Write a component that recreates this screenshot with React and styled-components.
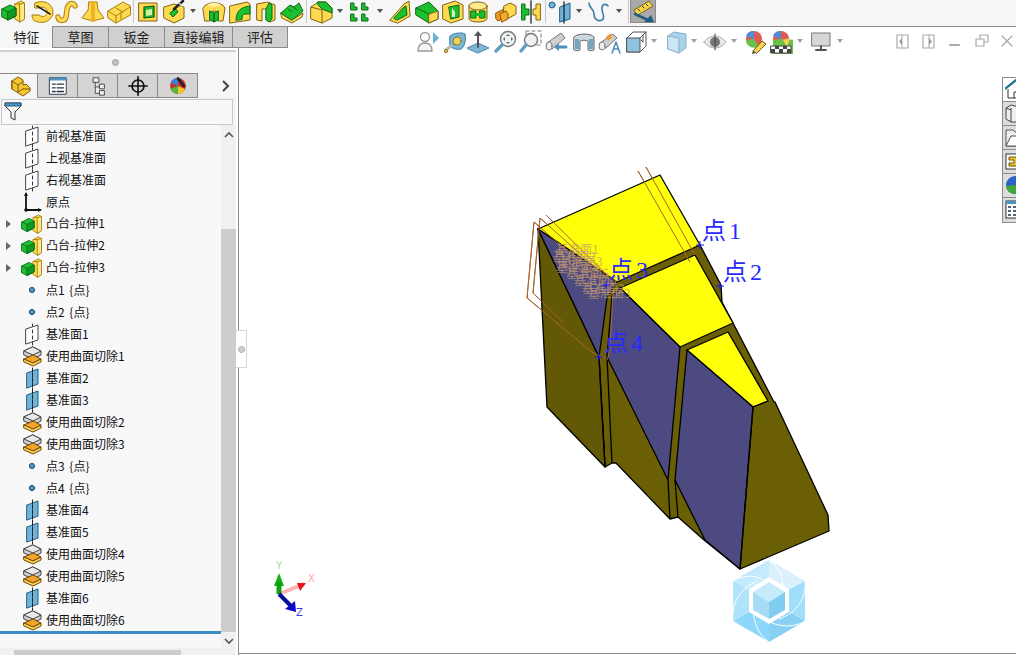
import React from "react";
import styled, { createGlobalStyle } from "styled-components";

const Global = createGlobalStyle`
  html, body { margin: 0; padding: 0; background: #fff; }
  body { font-family: "Noto Sans CJK SC", "Liberation Sans", sans-serif; }
`;

const Y = "#ffd94f";
const YD = "#a8800f";
const G = "#1cc02f";
const GD = "#0b6b18";
const B = "#6fb3d6";
const BD = "#1f5f85";

const Glyph = ({ size = 24, children }) => (
  <svg width={size} height={size} viewBox="0 0 24 24" strokeLinejoin="round" strokeLinecap="round" style={{ display: "block" }}>
    {children}
  </svg>
);

// feature toolbar
const Extrude = ({ size }) => (
  <Glyph size={size}>
    <polygon points="14,4 20,1 23.500,3 23.500,19 19,22 14,19" fill={Y} stroke={YD} />
    <polygon points="19,4 23.500,3 23.500,19 19,22" fill="#ffe98a" stroke={YD} />
    <path d="M14 4l5 0" stroke={YD} />
    <polygon points="1,9 9,5 15,8 15,16 7,20 1,17" fill={G} stroke={GD} />
    <polygon points="7,12 15,8 15,16 7,20" fill="#0e9a22" stroke={GD} />
    <path d="M1 9l6 3" stroke={GD} />
  </Glyph>
);
const Revolve = () => (
  <Glyph>
    <path d="M5 3c9-4 18 1 18 9s-9 13-18 9c-2-1-3-3-3-6h7c4 3 8 1 8-3s-4-6-8-4H5z" fill={Y} stroke={YD} />
    <path d="M7 6l13 8" stroke="#222" strokeWidth="1.500" />
  </Glyph>
);
const Sweep = () => (
  <Glyph>
    <path d="M3 17c1 5 7 4 8 0 1-4 0-9 3-12 2-2 5-2 6 1" fill="none" stroke={YD} strokeWidth="5.500" />
    <path d="M3 17c1 5 7 4 8 0 1-4 0-9 3-12 2-2 5-2 6 1" fill="none" stroke={Y} strokeWidth="3.500" />
  </Glyph>
);
const Loft = () => (
  <Glyph>
    <path d="M8 2h8l1 8 6 8-11 3-11-3 6-8z" fill={Y} stroke={YD} />
    <path d="M12 3v17" stroke="#f0b422" strokeWidth="4" />
  </Glyph>
);
const Block = () => (
  <Glyph>
    <polygon points="1,11 16,2 23.500,6 23.500,15 9,23 1,18" fill={Y} stroke={YD} />
    <path d="M1 11l8 5 14-9M9 16v7M9 8l7 4M14 19v-6" stroke={YD} fill="none" />
  </Glyph>
);
const Frame = () => (
  <Glyph>
    <polygon points="3,3 21,3 21,21 3,21" fill={Y} stroke="#7d6410" />
    <polygon points="8,7 18,6 18,17 8,18" fill={G} stroke="#12500f" strokeWidth="1.200" />
    <polygon points="10,10 16,9 16,15 10,16" fill="#d6f0a8" />
  </Glyph>
);
const Wizard = () => (
  <Glyph>
    <path d="M2 7l10-3 10 3v11l-10 5-10-5z" fill={Y} stroke="#7d6410" />
    <path d="M8 14l3 3 5-5-2-3-5 3z" fill={G} stroke={GD} />
    <path d="M12 9l9-8" stroke="#222" strokeWidth="2.600" />
    <path d="M17 3l3 3" stroke="#ddd" strokeWidth="1.400" />
  </Glyph>
);
const Dome = () => (
  <Glyph>
    <path d="M1 8c3-7 19-7 22 0l-2 13h-5V12l-4-1-4 1v9H3z" fill={Y} stroke="#7d6410" />
    <path d="M8 11l4 2v9l-4-2zM16 11l-4 2v9l4-2z" fill={G} stroke={GD} />
    <path d="M5 5c4-3 10-3 14 0l-7 2z" fill="#fff2a8" />
  </Glyph>
);
const Corner = () => (
  <Glyph>
    <polygon points="2,6 19,2 22,4 22,20 2,23" fill={Y} stroke="#7d6410" />
    <path d="M8 20c0-8 4-13 14-14v8h-5c-2 0-3 2-3 5z" fill={G} stroke={GD} />
  </Glyph>
);
const Slot = () => (
  <Glyph>
    <path d="M3 4l11-2 7 3v15l-5 2-3-2V9H8v12l-5-1z" fill={Y} stroke="#7d6410" />
    <path d="M12 9l3-6 3 2v14l-3 3-3-2z" fill={G} stroke={GD} />
  </Glyph>
);
const Wave = () => (
  <Glyph>
    <polygon points="1,13 12,20 23,13 22,17 12,23 2,18" fill={Y} stroke="#7d6410" />
    <path d="M1 13l9-8 4 2 5-4 4 8-11 9z" fill={G} stroke={GD} />
    <path d="M8 9l4 3M13 7l4 3" stroke={GD} fill="none" />
  </Glyph>
);
const Chamfer = () => (
  <Glyph>
    <path d="M2 7l7-5h8l6 6v10l-10 5-11-4z" fill={Y} stroke="#7d6410" />
    <path d="M9 2h8l6 6v5l-10-4-4-4z" fill={G} stroke={GD} />
    <path d="M2 7l11 3v13" fill="none" stroke="#7d6410" />
  </Glyph>
);
const Pattern = () => (
  <Glyph>
    <g fill={G} stroke={GD}>
      <path d="M3 3h3v4h3v3H3zM14 3h3v4h3v3h-6zM3 14h3v4h3v3H3zM14 14h3v4h3v3h-6z" />
    </g>
  </Glyph>
);
const Rib = () => (
  <Glyph>
    <path d="M2 20L16 4l5-3 1 15-12 7z" fill={Y} stroke="#7d6410" />
    <path d="M6 18l10-11 2-1 1 9-10 5z" fill={G} stroke={GD} />
  </Glyph>
);
const Wedge = () => (
  <Glyph>
    <polygon points="1,8 14,2 23,11 23,19 14,23 1,15" fill={G} stroke={GD} />
    <polygon points="14,14 23,11 23,19 14,23" fill={Y} stroke="#7d6410" />
    <path d="M14 14L1 8" stroke={GD} />
  </Glyph>
);
const Shell = () => (
  <Glyph>
    <polygon points="2,5 14,1 22,5 22,19 10,23 2,19" fill={Y} stroke="#7d6410" />
    <polygon points="8,7 18,5 18,17 10,19" fill={G} stroke={GD} />
    <path d="M11 8l3 4v5h-3z" fill="#ddeec0" />
  </Glyph>
);
const Wrap = () => (
  <Glyph>
    <path d="M3 6v13c2 4 16 4 18 0V6z" fill={Y} stroke="#7d6410" />
    <ellipse cx="12" cy="6" rx="9" ry="4" fill="#ffe98a" stroke="#7d6410" />
    <path d="M5 11h5v7H5zM14 11h5v7h-5z" fill={G} stroke={GD} />
    <path d="M10 13h4v3h-4z" fill={G} />
  </Glyph>
);
const Combine = () => (
  <Glyph>
    <polygon points="2,13 10,9 10,18 4,21 2,19" fill="#f39a1f" stroke="#8a5308" />
    <polygon points="10,6 16,3 22,6 22,14 15,18 10,15" fill={Y} stroke="#7d6410" />
    <polygon points="6,14 12,11 14,14 14,19 8,22" fill="#f6a92f" stroke="#8a5308" />
  </Glyph>
);
const Mirror = () => (
  <Glyph>
    <path d="M3 4h3v5h4v6H6v5H3z" fill={G} stroke={GD} />
    <path d="M21 4h-4v5h-3v6h3v5h4z" fill={Y} stroke="#7d6410" />
    <path d="M12 1v22" stroke="#222" strokeWidth="1.300" />
  </Glyph>
);
const RefPlane = () => (
  <Glyph>
    <circle cx="4" cy="5" r="3" fill={B} stroke={BD} />
    <polygon points="12,7 22,3 22,19 12,22" fill={B} stroke={BD} />
    <path d="M16 2v21" stroke="#222" strokeWidth="1.300" />
  </Glyph>
);
const Curve = () => (
  <Glyph>
    <path d="M2 3c0 5 5 6 5 11 0 5 4 8 8 6 5-3-3-10 1-15 1-1 4-1 5 1" fill="none" stroke="#3a7ea5" strokeWidth="1.600" />
  </Glyph>
);
const Instant = () => (
  <Glyph>
    <polygon points="3,10 18,1 22,6 7,15" fill="#f4d447" stroke="#7d6410" />
    <path d="M7 9l2 2M11 6l2 2M15 4l2 2" stroke="#333" />
    <path d="M4 14l15 7" stroke={BD} strokeWidth="2.600" />
    <polygon points="23,22 13,22 20,15" fill={BD} />
  </Glyph>
);

// view toolbar
const Prev = () => (
  <Glyph>
    <circle cx="9" cy="7" r="4.500" fill="#fff" stroke="#999" strokeWidth="1.400" />
    <path d="M2 21c0-6 3-8 7-8s7 2 7 8z" fill="#f4f4f4" stroke="#999" strokeWidth="1.400" />
    <polygon points="17,2 23,8 17,14" fill="#6fb0d8" />
  </Glyph>
);
const Tape = () => (
  <Glyph>
    <path d="M7 6c3-3 12-4 15-2 1 5 0 13-4 15-3 1-9 0-11-3z" fill="#7cb4d4" stroke="#3d7da3" />
    <circle cx="14" cy="11" r="4" fill="#f0d55a" stroke="#8a7518" />
    <path d="M8 16l-5 4" stroke="#bbb" strokeWidth="3" />
    <circle cx="3" cy="21" r="1.600" fill="#f2c75c" stroke="#8a7518" />
  </Glyph>
);
const Normal = () => (
  <Glyph>
    <polygon points="0,18 11,13 22,18 11,23" fill="#7fb4d6" stroke="#4d87ac" />
    <path d="M11 17V4" stroke="#555" strokeWidth="2" />
    <polygon points="11,1 15,6 7,6" fill="#555" />
  </Glyph>
);
const ZoomFit = () => (
  <Glyph>
    <circle cx="14" cy="9" r="7.500" fill="#eef3f6" stroke="#777" strokeWidth="1.400" />
    <path d="M8 15L2 21" stroke="#5f9dc3" strokeWidth="3.400" />
    <path d="M14 4l2 2h-4zM14 14l2-2h-4zM9 9l2-2v4zM19 9l-2-2v4z" fill="#666" />
  </Glyph>
);
const ZoomBox = () => (
  <Glyph>
    <rect x="7" y="1" width="15" height="14" fill="none" stroke="#777" strokeDasharray="3 3" />
    <circle cx="12" cy="10" r="6.500" fill="#eef3f6" stroke="#777" strokeWidth="1.400" />
    <path d="M7 15L2 21" stroke="#5f9dc3" strokeWidth="3.400" />
  </Glyph>
);
const Scope = () => (
  <Glyph>
    <path d="M3 13L17 3l4 5-13 11z" fill="#cfcfcf" stroke="#777" />
    <ellipse cx="5" cy="16" rx="3" ry="4" fill="#eee" stroke="#777" />
    <path d="M13 17h9" stroke="#4f90b8" strokeWidth="3" />
    <polygon points="10,17 15,13 15,21" fill="#4f90b8" />
  </Glyph>
);
const Section = () => (
  <Glyph>
    <path d="M2 7c3-4 17-4 20 0v13c-2 1-4 1-6 0V11c-2-1-6-1-8 0v9c-2 1-4 1-6 0z" fill="#cfd8dd" stroke="#666" />
    <path d="M3 9h4v10H3zM17 9h4v10h-4z" fill="#6fa6c6" />
  </Glyph>
);
const Dynamic = () => (
  <Glyph>
    <path d="M2 13L15 4l4 4-11 10z" fill="#cfcfcf" stroke="#777" />
    <ellipse cx="4" cy="16" rx="3" ry="4" fill="#eee" stroke="#777" />
    <path d="M8 7l5-4-1 4 3-1-5 5z" fill="#f29a1f" />
    <path d="M14 23l4-11 4 11M15.500 19h5" fill="none" stroke="#4f90b8" strokeWidth="1.600" />
  </Glyph>
);
const Orient = () => (
  <Glyph>
    <polygon points="3,8 9,2 22,2 22,16 16,22 3,22" fill="#fff" stroke="#555" />
    <polygon points="3,8 16,8 16,22 3,22" fill="#8fc3e0" stroke="#555" />
    <path d="M16 8l6-6M19 5v7M19 12l-2-2" stroke="#555" fill="none" />
  </Glyph>
);
const Cube = () => (
  <Glyph>
    <polygon points="4,6 10,2 22,4 22,18 15,23 4,19" fill="#a7d2ea" stroke="#8ab0c4" />
    <polygon points="4,6 15,8 15,23 4,19" fill="#cbe6f5" stroke="#8ab0c4" />
  </Glyph>
);
const Eye = () => (
  <Glyph>
    <path d="M1 12c6-8 16-8 22 0-6 8-16 8-22 0z" fill="#e8e8e8" stroke="#aaa" />
    <circle cx="12" cy="12" r="5" fill="#777" />
    <path d="M12 4v16" stroke="#444" />
  </Glyph>
);
const Ball = ({ cx = 11, cy = 9, r = 8 }) => (
  <g>
    <circle cx={cx} cy={cy} r={r} fill="#e05a55" />
    <path d={`M${cx} ${cy}L${cx - r} ${cy - 3}A${r} ${r} 0 0 1 ${cx} ${cy - r}z`} fill="#4f8fd6" />
    <path d={`M${cx} ${cy}L${cx - r} ${cy + 1}A${r} ${r} 0 0 0 ${cx + 5} ${cy + r - 1}z`} fill="#6cc04a" />
  </g>
);
const Appear = () => (
  <Glyph>
    <Ball />
    <path d="M10 21l9-10 4 3-9 9z" fill="#f6d253" stroke="#6b5a14" />
    <path d="M10 21l-1 3 4-1z" fill="#444" />
  </Glyph>
);
const Scene = () => (
  <Glyph>
    <Ball cx="12" />
    <path d="M14 10l7-2-3 9z" fill="#f6d253" />
    <path d="M2 16h20v7H2z" fill="#fff" stroke="#444" />
    <path d="M2 19h4v-3h4v3h4v-3h4v3h4v4h-4v-4h-4v4h-4v-4H6v4H2z" fill="#444" />
  </Glyph>
);
const Screen = () => (
  <Glyph>
    <rect x="3" y="3" width="18" height="13" fill="#d7d7d7" stroke="#777" />
    <path d="M12 16v3M7 20h10" stroke="#555" strokeWidth="2" />
  </Glyph>
);
const Caret = styled.i`
  display: block;
  width: 0;
  height: 0;
  border: 3.5px solid transparent;
  border-top: 4px solid ${(p) => p.$c || "#555"};
  border-bottom: 0;
  margin-top: 9px;
`;
const WinPrev = ({ flip }) => (
  <Glyph>
    <rect x="6" y="5" width="11" height="13" fill="none" stroke="#aaa" strokeWidth="1.200" />
    <path d={flip ? "M12 5v13" : "M11 5v13"} stroke="#aaa" />
    <polygon points={flip ? "12,8 15,11.500 12,15" : "11,8 8,11.500 11,15"} fill="#999" />
  </Glyph>
);
const WinNext = () => <WinPrev flip />;
const WinMin = () => (
  <Glyph><path d="M7 15h9" stroke="#aaa" strokeWidth="2" /></Glyph>
);
const WinMax = () => (
  <Glyph>
    <path d="M10 9V5h8v7h-4" fill="none" stroke="#aaa" strokeWidth="1.200" />
    <rect x="6" y="9" width="8" height="7" fill="none" stroke="#aaa" strokeWidth="1.200" />
  </Glyph>
);
const WinClose = () => (
  <Glyph><path d="M7 6l10 10M17 6L7 16" stroke="#aaa" strokeWidth="1.300" /></Glyph>
);

// feature tree
const PlaneLine = () => (
  <Glyph>
    <polygon points="5,6 17,2 17,17 5,21" fill="#fff" stroke="#444" />
    <path d="M11.500 1v2M11.500 7v3M11.500 13v3M11.500 19v3" stroke="#333" />
  </Glyph>
);
const PlaneBlue = () => (
  <Glyph>
    <polygon points="6,6 17,2 17,17 6,21" fill={B} stroke={BD} />
    <path d="M11.500 1v22" stroke="#222" strokeDasharray="4 1" />
  </Glyph>
);
const Origin = () => (
  <Glyph>
    <path d="M5 3v16h14" fill="none" stroke="#111" strokeWidth="1.800" />
    <path d="M5 1l2 4H3zM21 19l-4 2v-4z" fill="#111" />
    <circle cx="5" cy="19" r="1.800" fill="#111" />
  </Glyph>
);
const TreeExtrude = () => <Extrude size={21} />;
const Dot = () => (
  <Glyph>
    <circle cx="11" cy="11" r="2.600" fill="#4f93c0" stroke="#1f4f70" />
  </Glyph>
);
const Cut = () => (
  <Glyph>
    <polygon points="3,6 12,2 20,6 20,10 12,14 3,10" fill="#cfcfcf" stroke="#444" />
    <polygon points="3,6 12,10 20,6 12,2" fill="#e8e8e8" stroke="#444" />
    <polygon points="3,14 12,10 20,14 12,18" fill="#f3a52a" stroke="#6b4608" />
    <polygon points="3,14 12,18 20,14 20,17 12,21 3,17" fill="#ffd24f" stroke="#6b4608" />
  </Glyph>
);

const topItems = [
  [Extrude, 13], [Revolve, 42], [Sweep, 67], [Loft, 93], [Block, 119], ["sep", 133],
  [Frame, 148], [Wizard, 174], ["dd", 193], [Dome, 214], [Corner, 240], [Slot, 266], [Wave, 292], ["sep", 306],
  [Chamfer, 321], ["dd", 340], [Pattern, 360], ["dd", 380], [Rib, 400], [Wedge, 427], [Shell, 453], [Wrap, 478],
  [Combine, 506], [Mirror, 531], ["sep", 545], [RefPlane, 560], ["dd", 579], [Curve, 599], ["dd", 619], ["sep", 628],
];

const viewItems = [
  [Prev, 428], [Tape, 455], [Normal, 479], [ZoomFit, 506], [ZoomBox, 531], [Scope, 556], [Section, 584], [Dynamic, 610],
  [Orient, 636], ["dd", 654], [Cube, 676], ["dd", 694], [Eye, 715], ["dd", 734], [Appear, 755], [Scene, 781], ["dd", 800],
  [Screen, 821], ["dd", 840],
  [WinPrev, 903], [WinNext, 929], [WinMin, 955], [WinMax, 982], [WinClose, 1007],
];

const treeRows = [
  [PlaneLine, "前视基准面"],
  [PlaneLine, "上视基准面"],
  [PlaneLine, "右视基准面"],
  [Origin, "原点"],
  [TreeExtrude, "凸台-拉伸1", true],
  [TreeExtrude, "凸台-拉伸2", true],
  [TreeExtrude, "凸台-拉伸3", true],
  [Dot, "点1 {点}"],
  [Dot, "点2 {点}"],
  [PlaneLine, "基准面1"],
  [Cut, "使用曲面切除1"],
  [PlaneBlue, "基准面2"],
  [PlaneBlue, "基准面3"],
  [Cut, "使用曲面切除2"],
  [Cut, "使用曲面切除3"],
  [Dot, "点3 {点}"],
  [Dot, "点4 {点}"],
  [PlaneBlue, "基准面4"],
  [PlaneBlue, "基准面5"],
  [Cut, "使用曲面切除4"],
  [Cut, "使用曲面切除5"],
  [PlaneBlue, "基准面6"],
  [Cut, "使用曲面切除6"],
];

const Page = styled.div`
  width: 1016px;
  height: 655px;
  overflow: hidden;
  display: flex;
  flex-direction: column;
  background: #fff;
`;
const TopBar = styled.div`
  flex: 0 0 26px;
  display: flex;
  align-items: flex-start;
  background: #f6f6f6;
`;
const Cell = styled.div`
  flex: 0 0 ${(p) => p.$w}px;
  margin-left: ${(p) => p.$ml}px;
  height: 24px;
  display: flex;
  justify-content: center;
`;
const Sep = styled.div`
  flex: 0 0 1px;
  margin-left: ${(p) => p.$ml}px;
  height: 23px;
  background: #c9c9c9;
`;
const ActiveTool = styled.div`
  flex: 0 0 26px;
  margin-left: ${(p) => p.$ml}px;
  height: 23px;
  background: #a9a9a9;
  border: 1px solid #8a8a8a;
  border-top: 0;
  box-sizing: border-box;
  display: flex;
  justify-content: center;
`;
const TabRow = styled.div`
  flex: 0 0 22px;
  height: 22px;
  min-height: 0;
  display: flex;
  align-items: flex-start;
  position: relative;
  z-index: 1;
`;
const TabStrip = styled.div`
  display: flex;
  flex: 0 0 288px;
  height: 22px;
  background: #f6f6f6;
`;
const Tab = styled.div`
  flex: 0 0 ${(p) => p.$w}px;
  box-sizing: border-box;
  height: 22px;
  border-top: 1px solid ${(p) => (p.$on ? "#f6f6f6" : "#8a8a8a")};
  border-bottom: 1px solid ${(p) => (p.$on ? "#f6f6f6" : "#8a8a8a")};
  border-left: 1px solid ${(p) => (p.$on ? "transparent" : "#8a8a8a")};
  background: ${(p) => (p.$on ? "#f6f6f6" : "#d0d0d0")};
  font-size: 13px;
  line-height: 20px;
  color: #222;
  text-align: center;
  &:last-child { border-right: 1px solid #8a8a8a; }
`;
const ViewBar = styled.div`
  flex: 1;
  height: 28px;
  border-top: 1px solid #8a8a8a;
  box-sizing: border-box;
  padding-top: 3px;
  display: flex;
  align-items: flex-start;
`;
const Body = styled.div`
  flex: 1;
  display: flex;
  min-height: 0;
`;
const Sidebar = styled.aside`
  flex: 0 0 239px;
  box-sizing: border-box;
  border-right: 1px solid #8a8a8a;
  padding-right: 2px;
  background: #fff;
  position: relative;
  display: flex;
  flex-direction: column;
`;
const PanelHead = styled.div`
  flex: 0 0 23px;
  background: #f6f6f6;
  box-sizing: border-box;
  margin-top: 2px;
  border-top: 2px solid #d2d2d2;
  display: flex;
  align-items: center;
  justify-content: center;
  padding-right: 6px;
  &::before {
    content: "";
    width: 5px;
    height: 5px;
    border-radius: 50%;
    background: #c4c4c4;
    border: 1px solid #9a9a9a;
  }
`;
const PanelTabs = styled.div`
  flex: 0 0 25px;
  display: flex;
  align-items: stretch;
  background: #f6f6f6;
`;
const PanelTab = styled.div`
  flex: 0 0 ${(p) => p.$w}px;
  box-sizing: border-box;
  background: ${(p) => (p.$on ? "#f6f6f6" : "#d4d4d4")};
  border-top: 1px solid #8a8a8a;
  border-bottom: ${(p) => (p.$on ? "0" : "1px solid #8a8a8a")};
  border-right: 1px solid #8a8a8a;
  display: flex;
  align-items: center;
  justify-content: center;
`;
const More = styled.div`
  margin-left: auto;
  width: 24px;
  padding-left: 4px;
  box-sizing: border-box;
  display: flex;
  align-items: center;
  justify-content: center;
`;
const FilterRow = styled.div`
  flex: 0 0 27px;
  background: #f6f6f6;
  padding: 1px 3px 0 1px;
  box-sizing: border-box;
`;
const FilterBox = styled.div`
  height: 26px;
  box-sizing: border-box;
  border: 1px solid #c8c8c8;
  background: #f8f8f8;
  padding: 1px 0 0 2px;
`;
const TreeArea = styled.div`
  flex: 1;
  display: flex;
  min-height: 0;
  background: #f0f0f0;
`;
const TreeList = styled.div`
  flex: 0 0 221px;
  background: #f8f8f8;
  height: 523px;
  border-bottom-right-radius: 4px;
`;
const Row = styled.div`
  height: 22px;
  display: grid;
  grid-template-columns: 21px 25px 1fr;
  align-items: center;
  font-size: 12px;
  line-height: 20px;
  color: #111;
  white-space: nowrap;
  word-spacing: 2px;
`;
const RowText = styled.span`
  display: block;
  height: 22px;
`;
const Expand = styled.i`
  display: block;
  width: 0;
  height: 0;
  margin-left: 6px;
  border: 4px solid transparent;
  border-left: 5px solid #666;
  border-right: 0;
`;
const RowIcon = styled.div`
  display: flex;
  justify-content: flex-start;
`;
const ActiveLine = styled.div`
  height: 3px;
  background: #3b8ec4;
`;
const VScroll = styled.div`
  flex: 0 0 15px;
  height: 525px;
  display: flex;
  flex-direction: column;
  background: #f0f0f0;
`;
const Thumb = styled.div`
  flex: 0 0 403px;
  background: #cdcdcd;
`;
const ScrollEnd = styled.div`
  flex: ${(p) => (p.$top ? "0 0 104px" : "1")};
  padding-top: ${(p) => (p.$top ? "6px" : "0")};
  box-sizing: border-box;
  display: flex;
  align-items: ${(p) => (p.$top ? "flex-start" : "center")};
  justify-content: center;
`;
const HScroll = styled.div`
  flex: 0 0 5px;
  background: #f0f0f0;
  display: flex;
  padding-left: 14px;
`;
const HThumb = styled.div`
  width: 167px;
  background: #cdcdcd;
`;
const Gripper = styled.div`
  position: absolute;
  left: 236px;
  top: 282px;
  width: 11px;
  height: 38px;
  box-sizing: border-box;
  background: #fff;
  border: 1px solid #d8d8d8;
  border-left: 0;
  display: flex;
  align-items: center;
  justify-content: center;
  &::before {
    content: "";
    width: 5px;
    height: 5px;
    border-radius: 50%;
    background: #d0d0d0;
    border: 1px solid #aaa;
  }
`;
const Viewport = styled.main`
  flex: 1;
  position: relative;
  margin-bottom: 1px;
  border-bottom: 1px solid #8a8a8a;
  overflow: hidden;
`;
const Scene3D = styled.svg`
  position: absolute;
  left: 0;
  top: 0;
  width: 777px;
  height: 605px;
`;
const PointLabel = styled.text`
  font-family: "Liberation Serif", "Noto Sans CJK SC", serif;
  font-size: 24px;
  letter-spacing: -1.5px;
  fill: #2a2aff;
`;
const PlaneLabel = styled.text`
  font-family: "Noto Sans CJK SC", sans-serif;
  font-size: 12px;
  fill: #c49a70;
  opacity: 0.75;
`;
const AxisLabel = styled.text`
  font-family: "DejaVu Sans", sans-serif;
  font-size: 10px;
  fill: ${(p) => p.$c};
`;
const TaskPane = styled.div`
  position: absolute;
  right: 0;
  top: 29px;
  width: 14px;
  overflow: hidden;
  border: 1px solid #8a8a8a;
  border-right: 0;
  box-sizing: border-box;
`;
const TaskBtn = styled.div`
  height: 24px;
  box-sizing: border-box;
  background: ${(p) => (p.$on ? "#fff" : "#dcdcdc")};
  border-bottom: 1px solid #8a8a8a;
  overflow: hidden;
  padding: 1px 0 0 2px;
  &:last-child { border-bottom: 0; }
`;

// turns the icon centres into flow margins
const BarItems = ({ items, start = 0 }) => {
  let edge = start;
  return items.map(([Icon, c], i) => {
    const w = Icon === "sep" ? 1 : Icon === "dd" ? 8 : 24;
    const left = c - w / 2;
    const ml = left - edge;
    edge = left + w;
    if (Icon === "sep") return <Sep key={i} $ml={ml} />;
    if (Icon === "dd") return <Cell key={i} $w={8} $ml={ml}><Caret $c={start ? "#a0a0a0" : "#555"} /></Cell>;
    return <Cell key={i} $w={24} $ml={ml}><Icon /></Cell>;
  });
};

const Logo = () => (
  <g>
    <polygon points="769,600 769,560 805,581" fill="#daf1fd" />
    <polygon points="769,600 805,581 805,621" fill="#a0dffb" />
    <polygon points="769,600 805,621 769,642" fill="#88d0f4" />
    <polygon points="769,600 769,642 733,621" fill="#8cd8fb" />
    <polygon points="769,600 733,621 733,581" fill="#b0e3fa" />
    <polygon points="769,600 733,581 769,560" fill="#c4ebfd" />
    <path d="M733 581c14-8 30-6 40 8M769 560c12 8 18 24 10 40M805 581c2 16-8 32-26 38M805 621c-12 8-32 6-42-4M769 642c-12-8-18-24-14-40M733 621c-2-16 6-32 24-40" fill="none" stroke="#fff" strokeWidth="1" />
    <polygon points="769,577 789,589 789,612 769,624 749,612 749,589" fill="#fff" />
    <polygon points="769,582 785,592 769,602 753,592" fill="#c6ebfb" />
    <polygon points="753,592 769,602 769,619 753,610" fill="#a8dcf6" />
    <polygon points="785,592 769,602 769,619 785,610" fill="#80ccf0" />
  </g>
);

const Model = () => (
  <g stroke="#000" strokeWidth="1.300" strokeLinejoin="round">
    {/* olive sides */}
    <polygon points="538,229 599,357 605,467 612,463 616,463 670,519 678,517 704,540 740,569 829,531 828,515 775,402 774,402 733,323 722,302 721,285 700,245" fill="#6b5f05" />
    <polygon points="538,229 599,357 605,467 547,407" fill="#625805" />
    {/* yellow top faces */}
    <polygon points="538,229 660,175 700,245 617,282" fill="#ffff0a" />
    <polygon points="620,288 695,255 733,323 680,347" fill="#ffff0a" />
    <polygon points="687,350 728,332 768,401 753,407" fill="#ffff0a" />
    {/* blue faces */}
    <polygon points="538,229 617,282 607,298 599,357" fill="#4c4a80" />
    <polygon points="620,288 680,347 668,480 607,357 612,296" fill="#4c4a80" />
    <polygon points="687,350 753,407 740,569 705,540 675,480" fill="#4c4a80" />
    {/* seams */}
    <path d="M607 357L612 463M599 357L605 467M668 480L670 519M675 480L678 517M753 407L740 569M753 407L768 401" fill="none" />
  </g>
);

const Planes = () => (
  <g fill="none" stroke="#a9652e" strokeWidth="1">
    <path d="M638 171L690 262M646 167L695 255" />
    <path d="M534 222L527 298L593 353L606 358" />
    <path d="M540 218L533 293L563 322" />
    <path d="M546 215L612 280M534 222L610 288M540 218L614 284" />
    <path d="M613 290L610 350L607 360" />
  </g>
);

const stacked = [
  [556, 254, "基准面1"], [553, 261, "基准面2"], [560, 266, "基准面3"], [556, 272, "基准面4"],
  [566, 278, "基准面5"], [574, 285, "基准面6"], [582, 293, "基准面2"], [588, 298, "基准面3"],
];

const Cross = ({ x, y }) => <path d={`M${x - 4} ${y}h8M${x} ${y - 4}v8`} stroke="#1414ff" strokeWidth="1" />;

const Triad = () => (
  <g>
    <path d="M279 594L304 584" stroke="#ffb3b3" strokeWidth="3.600" />
    <polygon points="306,583 297,583 300,591" fill="#e8141c" />
    <polygon points="279,573 274,586 284,586" fill="#12b012" />
    <path d="M279 594V582" stroke="#12a012" strokeWidth="5" />
    <path d="M279 594L293 608" stroke="#0a0a9a" strokeWidth="4" />
    <polygon points="296,612 295,601 285,609" fill="#0a0ac8" />
    <AxisLabel x="276" y="569" $c="#9be89b">Y</AxisLabel>
    <AxisLabel x="308" y="582" $c="#ffa8a8">X</AxisLabel>
    <AxisLabel x="296" y="616" $c="#3a3ae0">Z</AxisLabel>
  </g>
);

const TabBall = () => (
  <Glyph size={20}>
    <circle cx="12" cy="12" r="9.500" fill="#c9302a" />
    <path d="M12 12L3 8a9.500 9.500 0 0 1 9-5.500z" fill="#3f7ed0" />
    <path d="M12 12L3 15a9.500 9.500 0 0 0 9 6.500z" fill="#55b53a" />
    <path d="M12 12v9.500a9.500 9.500 0 0 0 8.500-6z" fill="#f1c62f" />
    <path d="M12 3l7 9" stroke="#222" strokeWidth="3.400" />
  </Glyph>
);

export default function App() {
  return (
    <Page>
      <Global />
      <TopBar>
        <BarItems items={topItems} />
        <ActiveTool $ml={1.5}><Instant /></ActiveTool>
      </TopBar>
      <TabRow>
        <TabStrip>
          <Tab $w={52} $on>特征</Tab>
          <Tab $w={56}>草图</Tab>
          <Tab $w={56}>钣金</Tab>
          <Tab $w={68}>直接编辑</Tab>
          <Tab $w={56}>评估</Tab>
        </TabStrip>
        <ViewBar>
          <BarItems items={viewItems} start={288} />
        </ViewBar>
      </TabRow>
      <Body>
        <Sidebar>
          <PanelHead />
          <PanelTabs>
            <PanelTab $w={38} $on>
              <Glyph>
                <path d="M5 7l6-4 5 3v5l3-1 4 4v3l-7 5-11-7z" fill="#f7c52f" stroke="#7d5c10" />
                <path d="M5 7v8M5 7l6 4 5-3M11 11v7M11 18l5-3M16 15l7 0" fill="none" stroke="#7d5c10" />
              </Glyph>
            </PanelTab>
            <PanelTab $w={40}>
              <Glyph size={22}>
                <rect x="3" y="3" width="18" height="18" fill="#fff" stroke="#234" />
                <path d="M3 3h18v3H3z" fill="#4f93c0" />
                <path d="M6 10h3M11 10h7M6 14h3M11 14h7M6 18h3M11 18h7" stroke="#234" strokeWidth="1.400" />
              </Glyph>
            </PanelTab>
            <PanelTab $w={40}>
              <Glyph size={22}>
                <path d="M7 3h6v5H7zM9 8v12h6M9 13h6" fill="#eee" stroke="#444" />
                <path d="M14 10h5v5h-5zM14 17h5v5h-5z" fill="#eee" stroke="#444" />
              </Glyph>
            </PanelTab>
            <PanelTab $w={40}>
              <Glyph size={22}>
                <circle cx="12" cy="12" r="6.500" fill="none" stroke="#111" strokeWidth="1.800" />
                <path d="M12 2v20M2 12h20" stroke="#111" strokeWidth="1.800" />
              </Glyph>
            </PanelTab>
            <PanelTab $w={40}><TabBall /></PanelTab>
            <More>
              <svg width="10" height="12" viewBox="0 0 10 12"><path d="M2 1l5 5-5 5" fill="none" stroke="#444" strokeWidth="2" /></svg>
            </More>
          </PanelTabs>
          <FilterRow>
            <FilterBox>
              <svg width="20" height="20" viewBox="0 0 20 20">
                <path d="M1 2h16v3l-6 6v8l-4-2v-6L1 5z" fill="#f4f4f4" stroke="#333" />
                <path d="M1 2h16v3H1z" fill="#4f93c0" stroke="#2a5f80" />
              </svg>
            </FilterBox>
          </FilterRow>
          <TreeArea>
            <TreeList>
              {treeRows.map(([Icon, label, arrow]) => (
                <Row key={label}>
                  {arrow ? <Expand /> : <span />}
                  <RowIcon><Icon /></RowIcon>
                  <RowText>{label}</RowText>
                </Row>
              ))}
              <ActiveLine />
            </TreeList>
            <VScroll>
              <ScrollEnd $top>
                <svg width="10" height="8" viewBox="0 0 10 8"><path d="M1 6l4-4 4 4" fill="none" stroke="#555" strokeWidth="1.600" /></svg>
              </ScrollEnd>
              <Thumb />
              <ScrollEnd>
                <svg width="10" height="8" viewBox="0 0 10 8"><path d="M1 2l4 4 4-4" fill="none" stroke="#555" strokeWidth="1.600" /></svg>
              </ScrollEnd>
            </VScroll>
          </TreeArea>
          <HScroll><HThumb /></HScroll>
          <Gripper />
        </Sidebar>
        <Viewport>
          <Scene3D viewBox="239 48 777 605">
            <Planes />
            <Model />
            <Planes />
            {stacked.map(([x, y, t], i) => (
              <PlaneLabel key={i} x={x} y={y}>{t}</PlaneLabel>
            ))}
            <Cross x={700} y={245} />
            <Cross x={720} y={286} />
            <Cross x={606} y={285} />
            <Cross x={599} y={357} />
            <PointLabel x="702" y="239">点 1</PointLabel>
            <PointLabel x="723" y="280">点 2</PointLabel>
            <PointLabel x="609" y="278">点 3</PointLabel>
            <PointLabel x="604" y="351">点 4</PointLabel>
            <Logo />
            <Triad />
          </Scene3D>
          <TaskPane>
            <TaskBtn $on>
              <svg width="22" height="20" viewBox="0 0 22 20"><path d="M0 10l11-9 11 9" fill="none" stroke="#1f6f90" strokeWidth="2.200" /><path d="M3 10v9h16v-9" fill="#fff" stroke="#333" /><path d="M9 19v-6h4v6" fill="none" stroke="#333" /></svg>
            </TaskBtn>
            <TaskBtn>
              <svg width="22" height="20" viewBox="0 0 22 20"><path d="M1 5l5-3 12 3v14H6l-5-3z" fill="#eee" stroke="#444" /><path d="M6 5v14M1 5l5 2" fill="none" stroke="#444" /></svg>
            </TaskBtn>
            <TaskBtn>
              <svg width="22" height="20" viewBox="0 0 22 20"><path d="M1 3h7l2 2h10v14H1z" fill="#eee" stroke="#555" /><path d="M1 19l5-10h16l-4 10z" fill="#fff" stroke="#555" /></svg>
            </TaskBtn>
            <TaskBtn>
              <svg width="22" height="20" viewBox="0 0 22 20"><rect x="1" y="3" width="20" height="15" fill="#fff" stroke="#333" /><path d="M4 6h14v3h-5v3h5v3H4v-3h5V9H4z" fill="#f3c12e" stroke="#6b5410" /></svg>
            </TaskBtn>
            <TaskBtn>
              <svg width="22" height="22" viewBox="0 0 22 22"><circle cx="10" cy="10" r="9" fill="#2f62c8" /><path d="M1 11a9 9 0 0 0 17 3l-8-4z" fill="#3ca83a" /><path d="M10 10l9-3v7z" fill="#c93a2a" /></svg>
            </TaskBtn>
            <TaskBtn>
              <svg width="22" height="20" viewBox="0 0 22 20"><rect x="1" y="2" width="20" height="17" fill="#fff" stroke="#234" /><path d="M1 2h20v3H1z" fill="#4f93c0" /><path d="M3 8h3M8 8h8M3 12h3M8 12h8M3 16h3M8 16h8" stroke="#234" strokeWidth="1.400" /></svg>
            </TaskBtn>
          </TaskPane>
        </Viewport>
      </Body>
    </Page>
  );
}
